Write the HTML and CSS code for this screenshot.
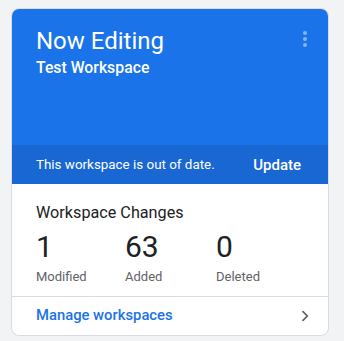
FILE: index.html
```html
<!DOCTYPE html>
<html>
<head>
<meta charset="utf-8">
<link rel="stylesheet" href="styles.css">
</head>
<body>
<div class="card">
  <div class="hero">
    <div class="title">Now Editing</div>
    <div class="subtitle">Test Workspace</div>
    <svg class="more" width="4" height="16" viewBox="0 0 4 16"><circle cx="2" cy="2" r="2"/><circle cx="2" cy="8" r="2"/><circle cx="2" cy="14" r="2"/></svg>
  </div>
  <div class="band">
    <span class="band-text">This workspace is out of date.</span>
    <span class="update">Update</span>
  </div>
  <div class="changes">
    <div class="changes-title">Workspace Changes</div>
    <div class="stats">
      <div class="stat stat-a"><div class="num">1</div><div class="lbl">Modified</div></div>
      <div class="stat stat-b"><div class="num">63</div><div class="lbl">Added</div></div>
      <div class="stat"><div class="num">0</div><div class="lbl">Deleted</div></div>
    </div>
  </div>
  <div class="footer">
    <span class="manage">Manage workspaces</span>
    <svg class="chev" width="8" height="12" viewBox="0 0 8 12"><path d="M1.5 1.2 L6.3 6 L1.5 10.8" fill="none" stroke="#5f6368" stroke-width="1.7"/></svg>
  </div>
</div>
</body>
</html>
```
FILE: styles.css
```css
html, body {
  margin: 0;
  padding: 0;
}
body {
  background: #f1f3f4;
  font-family: Roboto, "Liberation Sans", sans-serif;
  padding: 8px 0 0 11px;
  height: 341px;
  box-sizing: border-box;
}
.card {
  width: 318px;
  box-sizing: border-box;
  border: 1px solid #dadce0;
  border-radius: 8px;
  background: #fff;
  overflow: hidden;
}
.hero {
  position: relative;
  background: #1a73e8;
  height: 136px;
  box-sizing: border-box;
  padding: 18px 24px 0 24px;
  color: #fff;
}
.title {
  font-size: 24px;
  line-height: 28px;
  font-weight: 400;
}
.subtitle {
  margin-top: 3px;
  font-size: 15.8px;
  line-height: 20px;
  font-weight: 500;
}
.more {
  position: absolute;
  top: 22px;
  right: 21px;
  fill: #8ab4f8;
}
.band {
  background: #1967d2;
  height: 39px;
  display: flex;
  align-items: center;
  justify-content: space-between;
  padding: 0 27px 0 24px;
  color: #fff;
  font-size: 13.4px;
}
.update {
  font-weight: 500;
  font-size: 15px;
}
.changes {
  padding: 19px 24px 11px 24px;
  border-bottom: 1px solid #dadce0;
}
.changes-title {
  font-size: 16.2px;
  line-height: 20px;
  color: #202124;
}
.stats {
  display: flex;
  margin-top: 6px;
}
.stat-a {
  width: 89px;
}
.stat-b {
  width: 91px;
}
.num {
  font-size: 30px;
  line-height: 36px;
  color: #202124;
}
.lbl {
  margin-top: 4px;
  font-size: 13px;
  line-height: 16px;
  color: #5f6368;
}
.footer {
  display: flex;
  align-items: center;
  justify-content: space-between;
  padding: 8px 19px 10px 24px;
  height: 20px;
}
.manage {
  font-size: 14.8px;
  line-height: 20px;
  font-weight: 500;
  color: #1a73e8;
}
.chev {
  margin-top: 1px;
}
```
